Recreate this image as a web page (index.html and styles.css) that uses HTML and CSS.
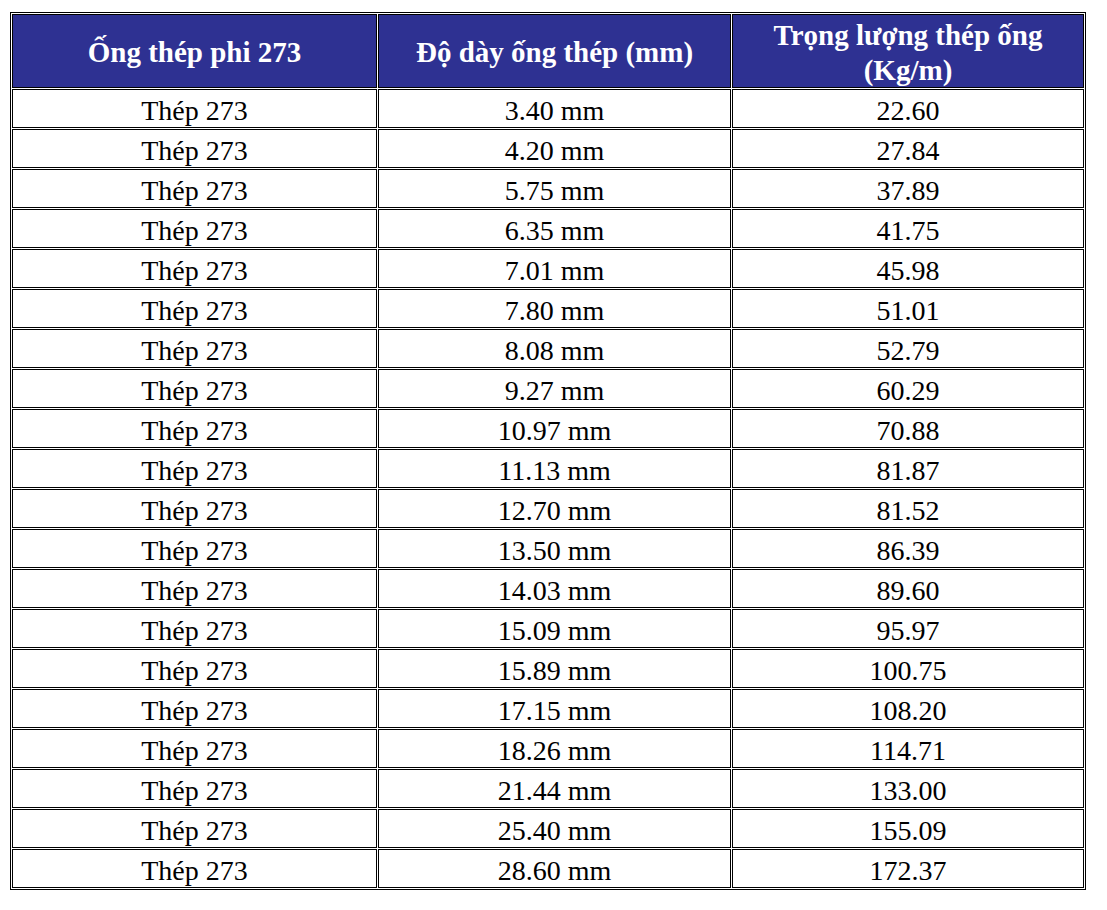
FILE: index.html
```html
<!DOCTYPE html>
<html lang="vi">
<head>
<meta charset="utf-8">
<title>Ống thép phi 273</title>
<link rel="stylesheet" href="styles.css">
</head>
<body>
<table class="spec">
  <colgroup>
    <col class="c1">
    <col class="c2">
    <col class="c3">
  </colgroup>
  <thead>
    <tr class="head">
      <th>Ống thép phi 273</th>
      <th>Độ dày ống thép (mm)</th>
      <th>Trọng lượng thép ống<br>(Kg/m)</th>
    </tr>
  </thead>
  <tbody>
    <tr><td>Thép 273</td><td>3.40 mm</td><td>22.60</td></tr>
    <tr><td>Thép 273</td><td>4.20 mm</td><td>27.84</td></tr>
    <tr><td>Thép 273</td><td>5.75 mm</td><td>37.89</td></tr>
    <tr><td>Thép 273</td><td>6.35 mm</td><td>41.75</td></tr>
    <tr><td>Thép 273</td><td>7.01 mm</td><td>45.98</td></tr>
    <tr><td>Thép 273</td><td>7.80 mm</td><td>51.01</td></tr>
    <tr><td>Thép 273</td><td>8.08 mm</td><td>52.79</td></tr>
    <tr><td>Thép 273</td><td>9.27 mm</td><td>60.29</td></tr>
    <tr><td>Thép 273</td><td>10.97 mm</td><td>70.88</td></tr>
    <tr><td>Thép 273</td><td>11.13 mm</td><td>81.87</td></tr>
    <tr><td>Thép 273</td><td>12.70 mm</td><td>81.52</td></tr>
    <tr><td>Thép 273</td><td>13.50 mm</td><td>86.39</td></tr>
    <tr><td>Thép 273</td><td>14.03 mm</td><td>89.60</td></tr>
    <tr><td>Thép 273</td><td>15.09 mm</td><td>95.97</td></tr>
    <tr><td>Thép 273</td><td>15.89 mm</td><td>100.75</td></tr>
    <tr><td>Thép 273</td><td>17.15 mm</td><td>108.20</td></tr>
    <tr><td>Thép 273</td><td>18.26 mm</td><td>114.71</td></tr>
    <tr><td>Thép 273</td><td>21.44 mm</td><td>133.00</td></tr>
    <tr><td>Thép 273</td><td>25.40 mm</td><td>155.09</td></tr>
    <tr><td>Thép 273</td><td>28.60 mm</td><td>172.37</td></tr>
  </tbody>
</table>
</body>
</html>
```

FILE: styles.css
```css
html, body {
  margin: 0;
  padding: 0;
  background: #ffffff;
}

body {
  padding: 12px 10px;
  font-family: "Liberation Serif", "Times New Roman", serif;
  color: #000000;
}

.spec {
  width: 1076px;
  table-layout: fixed;
  border-collapse: separate;
  border-spacing: 1px;
  border: 1px solid #000000;
}

.c1 { width: 365px; }
.c2 { width: 353px; }
.c3 { width: 352px; }

.spec th,
.spec td {
  border: 1px solid #000000;
  text-align: center;
  vertical-align: middle;
}

.spec th {
  background: #2e3192;
  color: #ffffff;
  font-weight: bold;
  font-size: 29px;
  line-height: 34.5px;
  padding: 3px 0 0;
  height: 69px;
}

.spec td {
  font-size: 28px;
  line-height: 33px;
  padding: 4px 0 0;
  height: 33px;
}
```
